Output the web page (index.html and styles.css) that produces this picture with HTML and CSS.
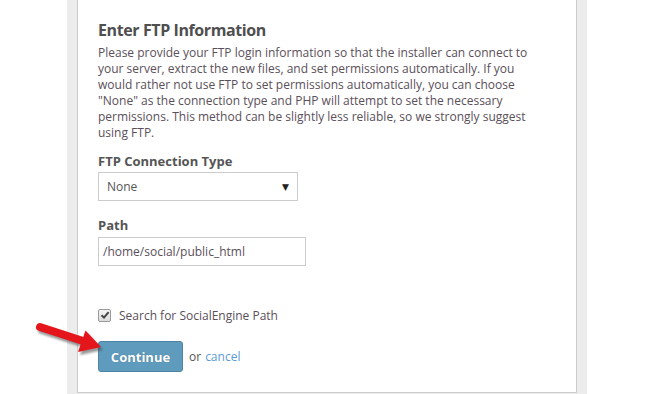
FILE: index.html
```html
<!DOCTYPE html>
<html>
<head>
<meta charset="utf-8">
<link rel="stylesheet" href="styles.css">
</head>
<body>
<div class="column">
  <div class="panel">
    <h2 class="title">Enter FTP Information</h2>
    <p class="desc">Please provide your FTP login information so that the installer can connect to your server, extract the new files, and set permissions automatically. If you would rather not use FTP to set permissions automatically, you can choose "None" as the connection type and PHP will attempt to set the necessary permissions. This method can be slightly less reliable, so we strongly suggest using FTP.</p>

    <div class="field">
      <div class="label">FTP Connection Type</div>
      <div class="select"><span>None</span><span class="caret">&#9660;</span></div>
    </div>

    <div class="field">
      <div class="label">Path</div>
      <div class="input">/home/social/public_html</div>
    </div>

    <div class="check-row">
      <span class="checkbox"><svg width="10" height="10" viewBox="0 0 10 10"><path d="M1.5 5.2 L4 7.6 L8.6 2.2" fill="none" stroke="#444" stroke-width="2"/></svg></span>
      <span>Search for SocialEngine Path</span>
    </div>

    <div class="actions">
      <span class="btn">Continue</span>
      <span class="or">or</span>
      <a class="cancel">cancel</a>
    </div>
  </div>
</div>

<svg class="arrow" width="130" height="80" viewBox="0 300 130 80">
  <defs>
    <filter id="blur" x="-20%" y="-20%" width="140%" height="140%"><feGaussianBlur stdDeviation="1.2"/></filter>
  </defs>
  <g transform="translate(2,3)" filter="url(#blur)" opacity="0.55">
    <line x1="40" y1="327" x2="83" y2="341" stroke="#444" stroke-width="8" stroke-linecap="round"/>
    <polygon points="101,347 78,352 85.5,330.5" fill="#444"/>
  </g>
  <line x1="40" y1="327" x2="83" y2="341" stroke="#e4161c" stroke-width="8" stroke-linecap="round"/>
  <polygon points="101,347 78,352 85.5,330.5" fill="#e4161c"/>
</svg>
</body>
</html>
```

FILE: styles.css
```css
html, body {
  margin: 0;
  padding: 0;
  background: #ffffff;
  height: 394px;
  overflow: hidden;
}

body {
  font-family: "Open Sans", "DejaVu Sans", sans-serif;
  color: #555555;
  position: relative;
}

.column {
  width: 500px;
  margin: 0 auto 0 67px;
  padding: 0 10px 1px 10px;
  background: #ececec;
}

.panel {
  background: #ffffff;
  border: 1px solid #cccccc;
  border-top: none;
  padding: 17px 20px 19px 20px;
  height: 356px;
}

.title {
  margin: 0 0 2px 0;
  font-size: 16px;
  font-weight: bold;
  line-height: 26px;
  color: #4f4f4f;
  letter-spacing: -0.4px;
}

.desc {
  margin: 0;
  font-size: 12px;
  line-height: 16px;
  color: #5a4f5a;
  width: 440px;
}

.field {
  margin-top: 11px;
}

.field + .field {
  margin-top: 15px;
}

.field + .field .label {
  margin-bottom: 3px;
}

.label {
  font-size: 13px;
  font-weight: bold;
  line-height: 18px;
  margin-bottom: 2px;
  color: #555;
}

.select {
  width: 182px;
  height: 27px;
  border: 1px solid #cccccc;
  display: flex;
  align-items: center;
  justify-content: space-between;
  padding: 0 8px 0 8px;
  font-size: 12px;
  color: #555;
}

.caret {
  font-size: 9px;
  color: #222;
}

.input {
  width: 202px;
  height: 27px;
  border: 1px solid #cccccc;
  display: flex;
  align-items: center;
  padding-left: 4px;
  font-size: 12px;
  color: #5a4f5a;
}

.check-row {
  margin-top: 41px;
  display: flex;
  align-items: center;
  gap: 8px;
  font-size: 12px;
  color: #5a4f5a;
  height: 16px;
}

.checkbox {
  width: 11px;
  height: 11px;
  border: 1px solid #9a9a9a;
  border-radius: 2px;
  background: linear-gradient(#f4f4f4, #dcdcdc);
  display: flex;
  align-items: center;
  justify-content: center;
}

.actions {
  margin-top: 18px;
  display: flex;
  align-items: center;
  font-size: 12px;
}

.btn {
  display: flex;
  align-items: center;
  justify-content: center;
  width: 83px;
  height: 29px;
  background: #5f9bbd;
  border: 1px solid #4d84a4;
  border-radius: 3px;
  color: #ffffff;
  font-weight: bold;
  font-size: 13px;
  text-shadow: 0 0 1px rgba(0,0,0,0.3);
}

.or {
  margin-left: 6px;
  color: #555;
}

.cancel {
  margin-left: 4px;
  color: #5b9bd5;
}

.arrow {
  position: absolute;
  left: 0;
  top: 300px;
}
```
